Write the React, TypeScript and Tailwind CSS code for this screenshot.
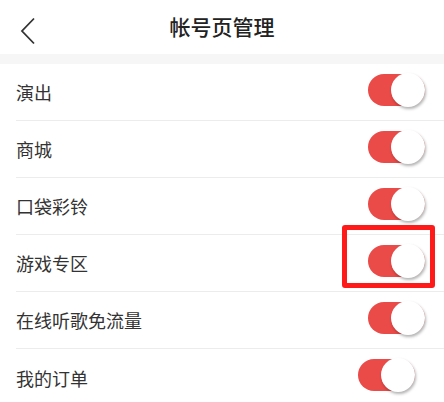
import React, { useState } from "react";

const items = ["演出", "商城", "口袋彩铃", "游戏专区", "在线听歌免流量", "我的订单"];

function Toggle({ on, onClick }: { on: boolean; onClick: () => void }) {
  return (
    <button
      onClick={onClick}
      className={`relative w-[57px] h-[32px] rounded-full ${on ? "bg-[#ea4b48]" : "bg-[#e5e5e5]"}`}
    >
      <span
        className={`absolute top-[-1px] w-[34px] h-[34px] rounded-full bg-white shadow-[1px_2px_3px_rgba(0,0,0,0.3)] ${
          on ? "right-0" : "left-0"
        }`}
      />
    </button>
  );
}

export default function App() {
  const [state, setState] = useState(items.map(() => true));

  return (
    <div className="w-[444px] h-[402px] overflow-hidden bg-white font-['Noto_Sans_CJK_SC',sans-serif] text-[#333]">
      {/* header */}
      <div className="relative h-[54px] flex items-center justify-center">
        <svg className="absolute left-[20px] top-[17px]" width="16" height="28" viewBox="0 0 16 28">
          <polyline points="14,1.5 2,14 14,26.5" fill="none" stroke="#333" strokeWidth="1.8" />
        </svg>
        <span className="text-[21px] font-medium text-[#222]">帐号页管理</span>
      </div>
      <div className="h-[10px] bg-[#f6f6f6]" />

      <div className="flex flex-col">
        {items.map((name, i) => (
          <div key={name} className="pl-4">
            <div
              className={`h-[57px] flex items-center justify-between ${i < items.length - 1 ? "border-b border-[#ececec]" : ""}`}
            >
              <span className="text-[18px] leading-none">{name}</span>
              <div
                className={`relative ${i === 5 ? "mr-[29px]" : "mr-[19px]"}`}
              >
                {i === 3 && (
                  <div className="absolute left-[-26px] top-[-20px] w-[93px] h-[63px] border-[5px] border-[#ff1a1a] rounded-[3px]" />
                )}
                <Toggle
                  on={state[i]}
                  onClick={() => setState(state.map((v, j) => (j === i ? !v : v)))}
                />
              </div>
            </div>
          </div>
        ))}
      </div>
    </div>
  );
}
